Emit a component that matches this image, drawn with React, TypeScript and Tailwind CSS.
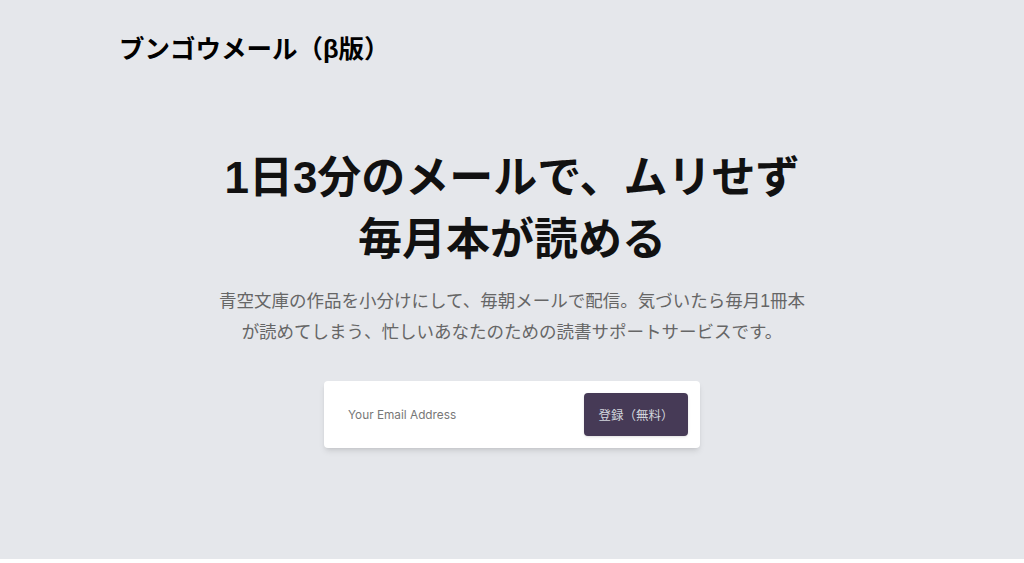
export default function App() {
  return (
    <div className="min-h-[563px] bg-white" style={{ fontFamily: '"Liberation Sans", "Noto Sans CJK JP", sans-serif' }}>
      <section className="h-[559px] bg-[#e5e7eb]">
        <header className="px-[119px] pt-[31px]">
          <h1 className="text-[25.5px] leading-9 font-bold text-black">ブンゴウメール（β版）</h1>
        </header>
        <div className="mt-[80px] flex flex-col items-center text-center">
          <h2 className="text-[44px] leading-[1.4] font-bold text-[#111]">
            1日3分のメールで、ムリせず
            <br />
            毎月本が読める
          </h2>
          <p className="mt-[16px] text-[17.5px] leading-[31px] text-[#666]">
            青空文庫の作品を小分けにして、毎朝メールで配信。気づいたら毎月1冊本
            <br />
            が読めてしまう、忙しいあなたのための読書サポートサービスです。
          </p>
          <form className="mt-[33px] flex h-[67px] w-[376px] items-center justify-between rounded bg-white pl-6 pr-3 pt-[3px] shadow-md">
            <input
              type="email"
              placeholder="Your Email Address"
              className="w-48 bg-transparent text-[11.8px] text-gray-700 placeholder:text-[#777] outline-none"
              style={{ fontFamily: 'Inter, "Noto Sans CJK JP", sans-serif' }}
            />
            <button type="button" className="mb-[3px] h-[43px] w-[104px] rounded bg-[#463a56] pt-[3px] text-[12.5px] text-gray-300 shadow">
              登録（無料）
            </button>
          </form>
        </div>
      </section>
    </div>
  )
}
